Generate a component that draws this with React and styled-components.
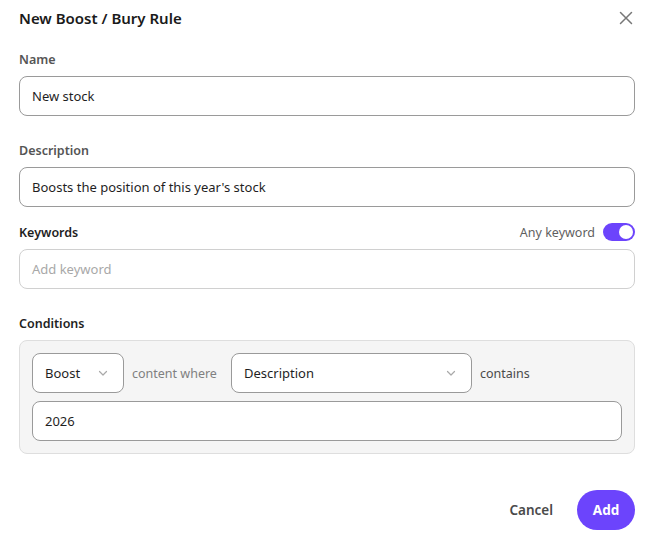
import React from 'react';
import styled, { createGlobalStyle } from 'styled-components';

const GlobalStyle = createGlobalStyle`
  html, body {
    margin: 0;
    padding: 0;
    background: #fff;
  }
  body {
    font-family: "Segoe UI", "Noto Sans", "Liberation Sans", sans-serif;
    color: #1f1f1f;
  }
`;

const Chevron = () => (
  <svg width="12" height="12" viewBox="0 0 12 12" fill="none">
    <path d="M2.5 4.5 L6 8 L9.5 4.5" stroke="#a9a9a9" strokeWidth="1.2" strokeLinecap="round" strokeLinejoin="round" />
  </svg>
);

const CloseIcon = () => (
  <svg width="14" height="14" viewBox="0 0 14 14" fill="none">
    <path d="M1.5 1.5 L12.5 12.5 M12.5 1.5 L1.5 12.5" stroke="#777" strokeWidth="1.5" strokeLinecap="round" />
  </svg>
);

export default function App() {
  return (
    <>
      <GlobalStyle />
      <Dialog>
        <Header>
          <Title>New Boost / Bury Rule</Title>
          <CloseButton aria-label="Close"><CloseIcon /></CloseButton>
        </Header>

        <Field $top={14}>
          <LabelRow><Label>Name</Label></LabelRow>
          <Input>New stock</Input>
        </Field>

        <Field $top={25}>
          <LabelRow><Label>Description</Label></LabelRow>
          <Input>Boosts the position of this year's stock</Input>
        </Field>

        <Field $top={16}>
          <LabelRow>
            <Label $strong>Keywords</Label>
            <ToggleGroup>
              <ToggleText>Any keyword</ToggleText>
              <Toggle $on><Knob /></Toggle>
            </ToggleGroup>
          </LabelRow>
          <Input $placeholder>Add keyword</Input>
        </Field>

        <Field $top={25}>
          <LabelRow><Label $strong>Conditions</Label></LabelRow>
          <ConditionBox>
            <ConditionRow>
              <Select $width={92}>
                <span>Boost</span>
                <Chevron />
              </Select>
              <Connector $width={91}>content where</Connector>
              <Select $width={241}>
                <span>Description</span>
                <Chevron />
              </Select>
              <Connector $dark>contains</Connector>
            </ConditionRow>
            <Input>2026</Input>
          </ConditionBox>
        </Field>

        <Footer>
          <GhostButton>Cancel</GhostButton>
          <PrimaryButton>Add</PrimaryButton>
        </Footer>
      </Dialog>
    </>
  );
}

const Dialog = styled.div`
  width: 653px;
  box-sizing: border-box;
  padding: 0 18px 0 19px;
  display: flex;
  flex-direction: column;
`;

const Header = styled.div`
  height: 36px;
  display: flex;
  align-items: center;
  justify-content: space-between;
`;

const Title = styled.h2`
  margin: 0;
  font-size: 15px;
  font-weight: 600;
  color: #1a1a1a;
`;

const CloseButton = styled.button`
  border: 0;
  background: none;
  padding: 0;
  margin-right: 2px;
  display: flex;
  cursor: pointer;
`;

const Field = styled.div`
  display: flex;
  flex-direction: column;
  gap: 8px;
  margin-top: ${p => p.$top}px;
`;

const LabelRow = styled.div`
  height: 18px;
  display: flex;
  align-items: center;
  justify-content: space-between;
`;

const Label = styled.label`
  font-size: 12.5px;
  font-weight: 600;
  color: ${p => (p.$strong ? '#1f1f1f' : '#555')};
`;

const ToggleGroup = styled.div`
  display: flex;
  align-items: center;
  gap: 8px;
`;

const ToggleText = styled.span`
  font-size: 12.5px;
  color: #5f5f5f;
`;

const Toggle = styled.div`
  width: 32px;
  height: 18px;
  border-radius: 9px;
  background: ${p => (p.$on ? '#6c44fc' : '#ccc')};
  display: flex;
  align-items: center;
  justify-content: ${p => (p.$on ? 'flex-end' : 'flex-start')};
  padding: 0 2px;
  box-sizing: border-box;
`;

const Knob = styled.div`
  width: 14px;
  height: 14px;
  border-radius: 50%;
  background: #fff;
`;

const Input = styled.div`
  height: 40px;
  box-sizing: border-box;
  border: 1px solid ${p => (p.$placeholder ? '#d0d0d0' : '#9a9a9a')};
  border-radius: 8px;
  background: #fff;
  padding: 0 12px;
  display: flex;
  align-items: center;
  font-size: 13px;
  color: ${p => (p.$placeholder ? '#a8a8a8' : '#1f1f1f')};
`;

const ConditionBox = styled.div`
  background: #f5f5f5;
  border: 1px solid #dedede;
  border-radius: 8px;
  padding: 12px;
  display: flex;
  flex-direction: column;
  gap: 8px;
`;

const ConditionRow = styled.div`
  display: flex;
  align-items: center;
  gap: 8px;
`;

const Select = styled.div`
  width: ${p => p.$width}px;
  height: 40px;
  box-sizing: border-box;
  border: 1px solid #9a9a9a;
  border-radius: 8px;
  background: #fff;
  padding: 0 14px 0 12px;
  display: flex;
  align-items: center;
  justify-content: space-between;
  font-size: 13px;
  color: #1f1f1f;
`;

const Connector = styled.span`
  width: ${p => (p.$width ? `${p.$width}px` : 'auto')};
  font-size: 12.5px;
  white-space: nowrap;
  color: ${p => (p.$dark ? '#4a4a4a' : '#808080')};
`;

const Footer = styled.div`
  margin-top: 36px;
  display: flex;
  justify-content: flex-end;
  align-items: center;
  gap: 12px;
`;

const GhostButton = styled.button`
  border: 0;
  background: none;
  padding: 0 12px;
  height: 40px;
  font-family: inherit;
  font-size: 13.5px;
  font-weight: 600;
  color: #4a4a4a;
`;

const PrimaryButton = styled.button`
  border: 0;
  background: #6c44fc;
  height: 40px;
  width: 58px;
  border-radius: 20px;
  font-family: inherit;
  font-size: 13.5px;
  font-weight: 700;
  color: #fff;
`;
